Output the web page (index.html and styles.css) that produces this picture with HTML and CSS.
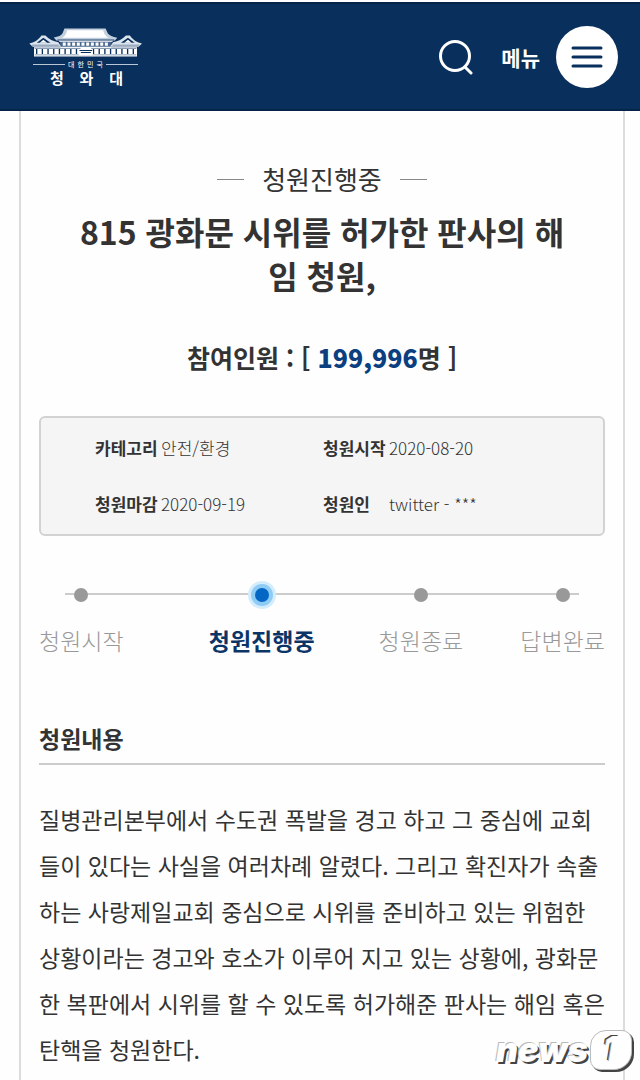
FILE: index.html
```
<!DOCTYPE html>
<html lang="ko">
<head>
    <meta charset="UTF-8" />
    <meta name="viewport" content="width=device-width, initial-scale=1" />
    <title>청와대 국민청원</title>
    <link rel="stylesheet" href="styles.css">
</head>
<body>
    <header class="header">
        <a href="#" class="logo">
            <svg class="logo-house" viewBox="84 78 344 92" aria-hidden="true">
                <!-- 본관 지붕 -->
                <path d="M193 82h123l7 15c4 6 14 9 28 13l-7 8H169l-8-9c14-3 23-6 26-12z" fill="#c3cfdd"/>
                <path d="M201 87h108c2 10 7 18 16 23H186c9-5 13-13 15-23z" fill="#fff"/>
                <path d="M172 115h170" stroke="#49678c" stroke-width="2"/>
                <path d="M180 118h154v22H180z" fill="#49678c"/>
                <path d="M177 120h160M182 138h150" stroke="#fff" stroke-width="3"/>
                <path d="M188 129h140" stroke="#fff" stroke-width="10" stroke-dasharray="9 5"/>
                <!-- 별채 지붕 -->
                <path d="M88 127c14-3 27-10 36-24h12c11 12 23 17 39 20l8 14H98z" fill="#dbe3ec"/>
                <path d="M425 127c-14-3-27-10-36-24h-12c-11 12-23 17-39 20l-8 14h85z" fill="#dbe3ec"/>
                <path d="M110 125l20-15 21 15zM403 125l-20-15-21 15z" fill="#092f5c"/>
                <path d="M119 125l11-9 11 9zM394 125l-11-9-11 9z" fill="#fff"/>
                <path d="M96 132h80M337 132h80" stroke="#49678c" stroke-width="2"/>
                <!-- 기둥 -->
                <path d="M102 138h308v28H102z" fill="#fff"/>
                <path d="M108 151h298" stroke="#092f5c" stroke-width="15" stroke-dasharray="4 13"/>
                <path d="M104 142h304M104 161h304" stroke="#49678c" stroke-width="2"/>
                <path d="M236 148l8-10h26l8 10v14h-42z" fill="#fff"/>
                <path d="M238 148h38M242 154h30" stroke="#092f5c" stroke-width="3"/>
            </svg>
            <span class="logo-country"><span>대</span><span>한</span><span>민</span><span>국</span></span>
            <span class="logo-name"><span>청</span><span>와</span><span>대</span></span>
        </a>
        <div class="header-right">
            <button class="btn-search" aria-label="검색">
                <svg viewBox="0 0 34 36" aria-hidden="true">
                    <circle cx="16" cy="17" r="14.5"/>
                    <path d="M26 28l6 6"/>
                </svg>
            </button>
            <button class="btn-menu">
                <span>메뉴</span>
                <span class="menu-circle">
                    <svg viewBox="0 0 32 22" aria-hidden="true">
                        <path d="M2 2h28M2 11h28M2 20h28"/>
                    </svg>
                </span>
            </button>
        </div>
    </header>

    <main class="petition">
        <p class="status">청원진행중</p>
        <h1 class="title">815 광화문 시위를 허가한 판사의 해임 청원,</h1>
        <p class="count">참여인원 : [ <strong>199,996</strong>명 ]</p>

        <dl class="info">
            <div><dt>카테고리</dt><dd>안전/환경</dd></div>
            <div><dt>청원시작</dt><dd>2020-08-20</dd></div>
            <div><dt>청원마감</dt><dd>2020-09-19</dd></div>
            <div><dt>청원인</dt><dd>twitter - ***</dd></div>
        </dl>

        <ol class="steps">
            <li>청원시작</li>
            <li class="on">청원진행중</li>
            <li>청원종료</li>
            <li>답변완료</li>
        </ol>

        <h2 class="subtitle">청원내용</h2>
        <p class="content">질병관리본부에서 수도권 폭발을 경고 하고 그 중심에 교회들이 있다는 사실을 여러차례 알렸다. 그리고 확진자가 속출하는 사랑제일교회 중심으로 시위를 준비하고 있는 위험한 상황이라는 경고와 호소가 이루어 지고 있는 상황에, 광화문 한 복판에서 시위를 할 수 있도록 허가해준 판사는 해임 혹은 탄핵을 청원한다.</p>
    </main>

    <!-- 사진 출처 표시 -->
    <div class="watermark">
        <span class="wm-news">news</span>
        <span class="wm-one">1</span>
    </div>
</body>
</html>
```
FILE: styles.css
```
* {
    box-sizing: border-box;
}
body {
    margin: 0;
    padding-top: 2px;
    min-height: 100vh;
    position: relative;
    display: flex;
    flex-direction: column;
    background-color: #fefefe;
    color: #333;
    font-family: 'Noto Sans CJK KR', sans-serif;
}
h1, h2, p, dl, dd, ol {
    margin: 0;
    padding: 0;
}
button {
    border: 0;
    padding: 0;
    background: none;
    color: inherit;
    font-family: inherit;
    cursor: pointer;
}

/* 상단 */
.header {
    display: flex;
    justify-content: space-between;
    align-items: center;
    height: 109px;
    padding: 0 22px 0 28px;
    background-color: #092f5c;
    border-top: 2px solid #06244a;
    border-bottom: 2px solid #06244a;
    color: #fff;
}
.logo {
    width: 115px;
    color: #fff;
    text-decoration: none;
}
.logo-house {
    display: block;
    width: 100%;
    height: 31px;
}
.logo-country {
    display: flex;
    align-items: center;
    gap: 3px;
    padding: 0 5px;
    font-size: 7px;
    line-height: 12px;
}
.logo-country::before,
.logo-country::after {
    content: '';
    flex: 1;
    height: 1px;
    background-color: #b9c6d6;
}
.logo-name {
    display: flex;
    justify-content: space-between;
    padding: 0 20px 0 22px;
    font-size: 15px;
    font-weight: bold;
    line-height: 16px;
}
.header-right {
    display: flex;
    align-items: center;
    gap: 28px;
}
.btn-search svg {
    display: block;
    width: 34px;
    height: 36px;
    fill: none;
    stroke: #fff;
    stroke-width: 3;
    stroke-linecap: round;
}
.btn-menu {
    display: flex;
    align-items: center;
    gap: 16px;
    font-size: 21px;
    font-weight: bold;
}
.menu-circle {
    display: flex;
    justify-content: center;
    align-items: center;
    width: 62px;
    height: 62px;
    border-radius: 50%;
    background-color: #fff;
}
.menu-circle svg {
    width: 32px;
    height: 22px;
    stroke: #092f5c;
    stroke-width: 3;
    stroke-linecap: round;
}

/* 청원 본문 */
.petition {
    flex: 1;
    margin: 0 15px 0 19px;
    padding: 48px 18px 0;
    border: solid #dcdcdc;
    border-width: 0 2px;
}
.status {
    display: flex;
    justify-content: center;
    align-items: center;
    gap: 18px;
    font-size: 26px;
    line-height: 40px;
}
.status::before,
.status::after {
    content: '';
    width: 27px;
    height: 1px;
    background-color: #888;
}
.title {
    padding: 10px 36px 0;
    font-size: 32px;
    line-height: 44px;
    text-align: center;
}
.count {
    margin-top: 40px;
    font-size: 25px;
    font-weight: bold;
    line-height: 40px;
    text-align: center;
}
.count strong {
    color: #0b3f80;
}
.info {
    display: grid;
    grid-template-columns: 228px 1fr;
    row-gap: 28px;
    margin-top: 39px;
    padding: 16px 0 16px 54px;
    background-color: #f5f5f5;
    border: 2px solid #d2d2d2;
    border-radius: 6px;
    font-size: 17px;
    line-height: 28px;
}
.info div {
    display: flex;
    gap: 3px;
}
.info dt {
    width: 63px;
    font-weight: bold;
}
.info dd {
    font-weight: 300;
}

/* 진행 단계 */
.steps {
    position: relative;
    display: grid;
    grid-template-columns: 30% 30% 1fr auto;
    justify-items: start;
    margin-top: 50px;
    list-style: none;
    color: #999;
    font-size: 23px;
    font-weight: 300;
    line-height: 36px;
}
.steps::before {
    content: '';
    position: absolute;
    top: 7px;
    left: 26px;
    right: 26px;
    height: 2px;
    background-color: #ccc;
}
.steps li::before {
    content: '';
    position: relative;
    display: block;
    width: 14px;
    height: 14px;
    margin: 2px auto 20px;
    border-radius: 50%;
    background-color: #999;
}
.steps .on {
    color: #0b3567;
    font-weight: bold;
}
.steps .on::before {
    background-color: #0567c4;
    box-shadow: 0 0 0 4px #8fccf5, 0 0 0 7px #d3edfc;
}
.subtitle {
    margin-top: 62px;
    padding-bottom: 7px;
    border-bottom: 2px solid #ccc;
    font-size: 23px;
    line-height: 36px;
}
.content {
    margin-top: 31px;
    font-size: 23px;
    line-height: 46px;
}

.watermark {
    position: absolute;
    right: 8px;
    bottom: 10px;
    display: flex;
    align-items: center;
    gap: 2px;
    color: #fff;
    font-family: Inter, sans-serif;
    font-style: italic;
    font-weight: 900;
    line-height: 40px;
}
.wm-news {
    font-size: 34px;
    text-shadow: -1px -1px 0 #bbb, 2px 2px 0 #444;
}
.wm-one {
    width: 42px;
    height: 40px;
    border: 1px solid #bbb;
    border-radius: 16px 10px 18px 10px;
    background-color: #fff;
    box-shadow: 2px 2px 0 #444;
    font-size: 34px;
    line-height: 36px;
    text-align: center;
    text-shadow: -1px 0 0 #999, -2px -1px 0 #444;
}
```
